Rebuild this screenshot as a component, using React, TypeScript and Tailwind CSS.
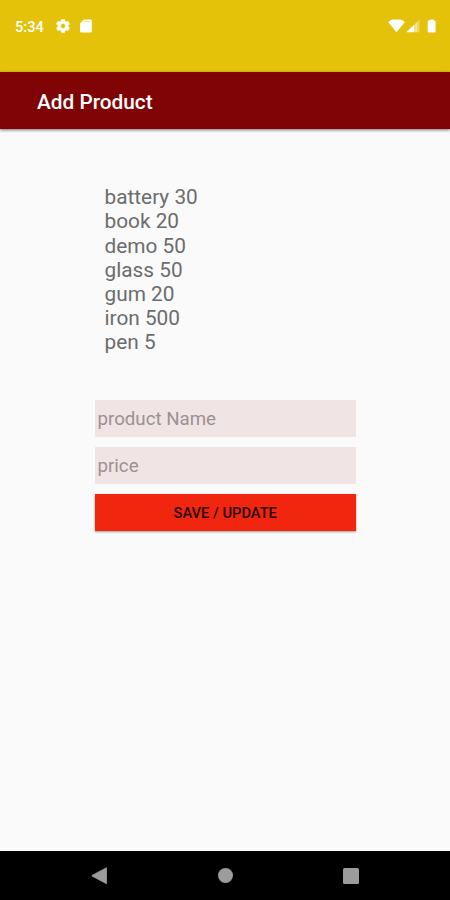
const products = [
  { name: 'battery', price: 30 },
  { name: 'book', price: 20 },
  { name: 'demo', price: 50 },
  { name: 'glass', price: 50 },
  { name: 'gum', price: 20 },
  { name: 'iron', price: 500 },
  { name: 'pen', price: 5 },
];

function StatusBar() {
  return (
    <header className="flex h-[72px] shrink-0 items-start bg-[#e3c209] pr-[13px] pl-[15px] pt-[17px] text-white">
      <span className="w-[40.5px] text-[14.6px] leading-5 font-medium">5:34</span>
      <svg className="mt-[2px] h-[14px] w-[14px]" viewBox="2 2 20 20" fill="currentColor" stroke="currentColor" strokeWidth=".7">
        <path d="M19.14 12.94c.04-.3.06-.61.06-.94 0-.32-.02-.64-.07-.94l2.03-1.58a.49.49 0 0 0 .12-.61l-1.92-3.32a.488.488 0 0 0-.59-.22l-2.39.96c-.5-.38-1.03-.7-1.62-.94l-.36-2.54a.484.484 0 0 0-.48-.41h-3.84c-.24 0-.43.17-.47.41l-.36 2.54c-.59.24-1.13.57-1.62.94l-2.39-.96c-.22-.08-.47 0-.59.22L2.74 8.87c-.12.21-.08.47.12.61l2.03 1.58c-.05.3-.09.63-.09.94s.02.64.07.94l-2.03 1.58a.49.49 0 0 0-.12.61l1.92 3.32c.12.22.37.29.59.22l2.39-.96c.5.38 1.03.7 1.62.94l.36 2.54c.05.24.24.41.48.41h3.84c.24 0 .44-.17.47-.41l.36-2.54c.59-.24 1.13-.56 1.62-.94l2.39.96c.22.08.47 0 .59-.22l1.92-3.32c.12-.22.07-.47-.12-.61l-2.01-1.58zM12 15.6A3.6 3.6 0 1 1 12 8.4a3.6 3.6 0 0 1 0 7.2z" />
      </svg>
      <svg className="mt-[2px] ml-[10px] h-[14px] w-[12px]" viewBox="0 0 12 14" fill="currentColor">
        <path d="M4 .4h6.500a1.300 1.300 0 0 1 1.300 1.300v10.500a1.300 1.300 0 0 1-1.300 1.300H1.400A1.300 1.300 0 0 1 .1 12.200V4.300z" />
        <path d="M4 2.700h5.800" stroke="#e3c209" strokeOpacity=".55" strokeWidth="1" />
      </svg>
      <div className="ml-auto flex items-start pt-[2px]">
        <svg className="h-[14px] w-[18px]" viewBox="0 0 18 14" fill="currentColor">
          <path d="M.3 3.300C1.600 1.500 3.300.6 5.300.6h6.400c2 0 3.700.9 5 2.700L8.500 13.200z" />
        </svg>
        <svg className="h-[14px] w-[15px]" viewBox="0 0 15 14" fill="currentColor">
          <path d="M13.500.6v12.600h-4V4.500z" opacity=".35" />
          <path d="M11 3v10.200H8V6z" opacity=".35" />
          <path d="M8.300 5.600v7.600H.3z" />
        </svg>
        <svg className="ml-[6px] h-[14px] w-[10px]" viewBox="0 0 10 14" fill="currentColor">
          <path d="M2.800.5h3.800v.9h.8c.7 0 1.200.5 1.200 1.100v9.900c0 .6-.5 1-1.100 1H1.800c-.6 0-1.100-.4-1.100-1V2.500c0-.6.500-1.100 1.200-1.100h.9z" />
        </svg>
      </div>
    </header>
  );
}

function NavigationBar() {
  return (
    <nav className="flex h-[49px] shrink-0 items-center justify-between bg-black pr-[91.5px] pl-[91px] text-[#9c9c9c]">
      <svg className="h-[18px] w-[17px]" viewBox="0 0 17 18" fill="currentColor">
        <path d="M15.500.7v16L1 9.100V8.400z" stroke="currentColor" strokeWidth=".8" strokeLinejoin="round" />
      </svg>
      <span className="h-[15.5px] w-[15.5px] rounded-full bg-[#9c9c9c]" />
      <span className="h-4 w-4 rounded-[1.5px] bg-[#9c9c9c]" />
    </nav>
  );
}

export default function App() {
  return (
    <div className="flex h-[900px] w-[450px] flex-col overflow-hidden bg-[#fafafa] font-[Roboto,sans-serif]">
      <StatusBar />
      <div className="z-10 flex h-[57px] shrink-0 items-center bg-[#800406] pt-[3px] pl-[37px] shadow-[0_1px_3px_rgba(0,0,0,0.55)]">
        <h1 className="text-[20.8px] leading-6 font-medium text-white">Add Product</h1>
      </div>
      <main className="flex flex-1 flex-col pl-[95px] pt-[56.3px]">
        <ul className="h-[214.7px] pl-[9.5px] text-[20.8px] leading-[24.15px] text-[#6c6c6c]">
          {products.map((product) => (
            <li key={product.name}>
              {product.name} {product.price}
            </li>
          ))}
        </ul>
        <form className="flex w-[260.5px] flex-col gap-[10px]" onSubmit={(e) => e.preventDefault()}>
          <input
            className="h-[37px] bg-[#f1e4e4] px-[2.5px] pt-px text-[18.7px] outline-none placeholder:text-[#9b9292]"
            placeholder="product Name"
          />
          <input
            className="h-[37px] bg-[#f1e4e4] px-[2.5px] pt-[2px] text-[18.7px] outline-none placeholder:text-[#9b9292]"
            placeholder="price"
          />
          <button className="h-[37px] bg-[#f0260e] pt-[2px] text-[14.7px] font-medium text-[#260502] shadow-[0_1px_2px_rgba(0,0,0,0.4)]">
            SAVE / UPDATE
          </button>
        </form>
      </main>
      <NavigationBar />
    </div>
  );
}
